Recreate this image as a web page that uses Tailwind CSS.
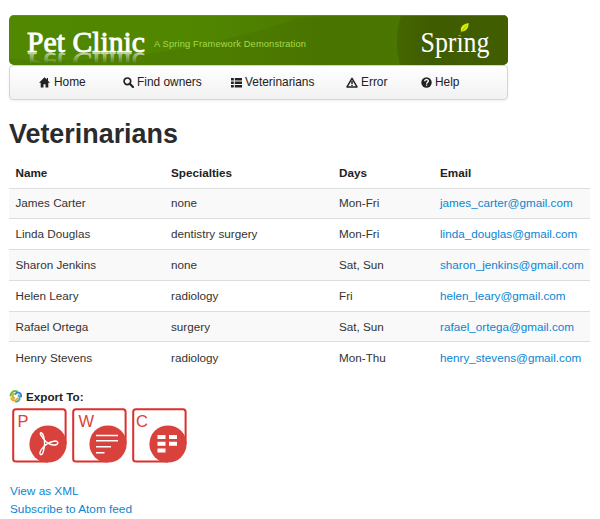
<!DOCTYPE html>
<html lang="en">
<head>
<meta charset="utf-8">
<title>Pet Clinic</title>
<script src="https://cdn.jsdelivr.net/npm/@tailwindcss/browser@4"></script>
</head>
<body class="bg-white">
<div class="h-[519px] w-[600px] overflow-hidden bg-white pl-[9px] pt-[15px] font-['Liberation_Sans',Arial,sans-serif] text-[11.700px] leading-[17px] text-[#333]">
  <header class="w-[499px]">
    <svg class="block h-[50px] w-[499px]" viewBox="0 0 499 50">
      <defs>
        <linearGradient id="bg" x1="0" x2="1" y1="0" y2="0"><stop offset="0" stop-color="#518800"/><stop offset=".4" stop-color="#508500"/><stop offset=".62" stop-color="#4d7900"/><stop offset="1" stop-color="#4f7d02"/></linearGradient>
        <linearGradient id="dark" x1="0" x2="1" y1="0" y2="0"><stop offset="0" stop-color="#446700"/><stop offset=".3" stop-color="#3f5c00"/><stop offset="1" stop-color="#405d00"/></linearGradient>
        <linearGradient id="shine" x1="0" x2="0" y1="36" y2="26" gradientUnits="userSpaceOnUse"><stop offset="0" stop-color="#fff" stop-opacity=".5"/><stop offset="1" stop-color="#fff" stop-opacity="0"/></linearGradient>
        <clipPath id="c"><rect width="499" height="50" rx="5"/></clipPath>
      </defs>
      <g clip-path="url(#c)">
        <rect width="499" height="50" fill="url(#bg)"/>
        <path d="M0 44Q70 49 145 38T290 3L330 0H400V50H0Z" fill="#446800" fill-opacity=".25"/>
        <path d="M392 0Q384 25 391 50H499V0Z" fill="url(#dark)"/>
        <path d="M0 .5H499" stroke="#6f963a" stroke-opacity=".6"/>
      </g>
      <g font-family="'Liberation Serif', serif">
        <text x="18" y="36.500" font-size="30" fill="#fff" stroke="#fff" stroke-width=".9" textLength="118" lengthAdjust="spacingAndGlyphs">Pet Clinic</text>
        <text aria-hidden="true" transform="matrix(1 0 0 -1 0 74.500)" x="18" y="36.500" font-size="30" fill="url(#shine)" stroke="url(#shine)" stroke-width=".7" textLength="118" lengthAdjust="spacingAndGlyphs">Pet Clinic</text>
        <text x="411.500" y="37" font-size="29.500" fill="#fff" textLength="69" lengthAdjust="spacingAndGlyphs">Spring</text>
      </g>
      <circle cx="451.500" cy="18" r="2.800" fill="#405d00"/>
      <path d="M452 16.800C450.800 11 454.800 9 459.600 8C459.800 13 457 16.600 452 16.800Z" fill="#d9f000"/>
      <path d="M451.300 18.300L457.500 10.500" stroke="#759500" stroke-width=".6"/>
      <text x="145" y="31.500" font-family="'Liberation Sans', sans-serif" font-size="9.300" fill="#a5db4c" textLength="152">A Spring Framework Demonstration</text>
    </svg>
    <nav class="flex h-[35px] items-center rounded-[4px] border border-[#d4d4d4] bg-linear-to-b from-white to-[#f2f2f2] text-[11.900px] text-[#222] shadow-[0_1px_3px_rgba(0,0,0,0.06)]">
      <a class="flex w-[83px] items-center gap-[4px] pl-[29px]"><svg class="h-[11px] w-[11px] shrink-0" viewBox="0 0 11 11"><path d="M5.500 .3L0 5.800H1.700V10.500H4.500V7.200H6.500V10.500H9.300V5.800H11L9 3.800V1H7.700V2.500Z" fill="#222"/></svg>Home</a>
      <a class="ml-[30px] flex w-[108px] items-center gap-[3px]"><svg class="h-[11px] w-[11px] shrink-0" viewBox="0 0 11 11"><circle cx="4.400" cy="4.300" r="3.300" fill="none" stroke="#222" stroke-width="1.700"/><path d="M6.800 6.800L10 10" stroke="#222" stroke-width="2.200" stroke-linecap="round"/></svg>Find owners</a>
      <a class="flex w-[115px] items-center gap-[3px]"><svg class="h-[11px] w-[11px] shrink-0" viewBox="0 0 11 11"><path d="M0 1H2.800V3.400H0ZM3.800 1H11V3.400H3.800ZM0 4.500H2.800V6.900H0ZM3.800 4.500H11V6.900H3.800ZM0 8H2.800V10.400H0ZM3.800 8H11V10.400H3.800Z" fill="#222"/></svg>Veterinarians</a>
      <a class="flex w-[75px] items-center gap-[3px]"><svg class="h-[11px] w-[12px] shrink-0" viewBox="0 0 12 11"><path d="M6 1.300L11 9.900H1Z" fill="none" stroke="#222" stroke-width="1.500" stroke-linejoin="round"/><path d="M6 4V7M6 7.800V9" stroke="#222" stroke-width="1.500"/></svg>Error</a>
      <a class="flex items-center gap-[3px]"><svg class="h-[11px] w-[11px] shrink-0" viewBox="0 0 11 11"><circle cx="5.500" cy="5.500" r="5.200" fill="#222"/><path d="M3.700 4.200C3.700 1.900 7.400 2 7.400 4.100C7.400 5.400 5.600 5.300 5.600 6.700M5.600 7.500V8.800" fill="none" stroke="#fff" stroke-width="1.300"/></svg>Help</a>
    </nav>
  </header>

  <h2 class="mt-[17px] h-[33px] text-[26.900px] font-bold leading-[34px] text-[#2b2b2b]">Veterinarians</h2>

  <table class="mt-[8px] w-[581px] table-fixed border-collapse text-left [&_td]:h-[30.800px] [&_td]:border-t [&_td]:border-[#ddd] [&_td]:p-0 [&_td]:pb-px [&_td]:pl-[7px] [&_td:first-child]:pl-[6.500px] [&_th:first-child]:pl-[6.500px] [&_th]:h-[30px] [&_th]:p-0 [&_th]:pl-[7px] [&_th]:text-[#222]">
    <colgroup><col class="w-[155px]"><col class="w-[168px]"><col class="w-[101px]"><col></colgroup>
    <thead><tr><th>Name</th><th>Specialties</th><th>Days</th><th>Email</th></tr></thead>
    <tbody class="[&>tr:nth-child(odd)]:bg-[#f9f9f9] [&_a]:text-[#0a85d1]">
      <tr><td>James Carter</td><td>none</td><td>Mon-Fri</td><td><a>james_carter@gmail.com</a></td></tr>
      <tr><td>Linda Douglas</td><td>dentistry surgery</td><td>Mon-Fri</td><td><a>linda_douglas@gmail.com</a></td></tr>
      <tr><td>Sharon Jenkins</td><td>none</td><td>Sat, Sun</td><td><a>sharon_jenkins@gmail.com</a></td></tr>
      <tr><td>Helen Leary</td><td>radiology</td><td>Fri</td><td><a>helen_leary@gmail.com</a></td></tr>
      <tr><td>Rafael Ortega</td><td>surgery</td><td>Sat, Sun</td><td><a>rafael_ortega@gmail.com</a></td></tr>
      <tr><td>Henry Stevens</td><td>radiology</td><td>Mon-Thu</td><td><a>henry_stevens@gmail.com</a></td></tr>
    </tbody>
  </table>

  <div class="mt-[15px] flex h-[17px] items-center gap-[3px] font-bold text-[#222]">
    <svg class="h-[14px] w-[14px]" viewBox="0 0 14 14" fill="none" stroke-width="2" stroke-linecap="round">
      <path d="M1.500 6.500C2 3 5 1 8 2.500" stroke="#72b944"/><path d="M6.500 5C8.500 2 12.500 4 12 7.500" stroke="#3789bf"/><path d="M9.500 6.500C12 9 10.500 12.500 7 12.700" stroke="#4baac8"/><path d="M8.500 9.500C6.500 12.500 3.500 12 2.200 9.300" stroke="#e9ac25"/><path d="M5 9C3 8 3 5.500 4.800 4.800" stroke="#c6ad35"/>
    </svg>Export To:
  </div>
  <div class="mt-[3px] flex gap-[5px] pl-[2.500px]">
    <svg class="h-[55px] w-[55px]" viewBox="0 0 55 55"><path d="M36 53.600H4Q1.200 53.600 1.200 51V4Q1.200 1.200 4 1.200H51Q53.600 1.200 53.600 4V36" fill="#fff" stroke="#db302d" stroke-width="2"/><circle cx="36" cy="36" r="18.600" fill="#d9423c"/><text x="5.500" y="18.500" font-family="'Liberation Sans', sans-serif" font-size="16.500" fill="#d9423c">P</text><path d="M29.500 28C31.500 32 36 36.500 41 37C46.500 37.500 47.500 33 43 33C37 33.500 31.500 38 29 42C26.500 46.500 29.500 48.500 31 44.500C33 39 33 33 31.500 28C30 23.500 26.500 24 29.500 28Z" fill="none" stroke="#fff" stroke-width="1.400"/></svg>
    <svg class="h-[55px] w-[55px]" viewBox="0 0 55 55"><path d="M36 53.600H4Q1.200 53.600 1.200 51V4Q1.200 1.200 4 1.200H51Q53.600 1.200 53.600 4V36" fill="#fff" stroke="#db302d" stroke-width="2"/><circle cx="36" cy="36" r="18.600" fill="#d9423c"/><text x="6.500" y="18.500" font-family="'Liberation Sans', sans-serif" font-size="16.500" fill="#d9423c">W</text><path d="M24 27.500H46M24 32.700H46M24 38.700H39M24 44.700H32.500" stroke="#fff" stroke-width="1.500"/></svg>
    <svg class="h-[55px] w-[55px]" viewBox="0 0 55 55"><path d="M36 53.600H4Q1.200 53.600 1.200 51V4Q1.200 1.200 4 1.200H51Q53.600 1.200 53.600 4V36" fill="#fff" stroke="#db302d" stroke-width="2"/><circle cx="36" cy="36" r="18.600" fill="#d9423c"/><text x="4" y="18.500" font-family="'Liberation Sans', sans-serif" font-size="16.500" fill="#d9423c">C</text><path d="M25.500 27H33.500V31H25.500ZM37 27H45V31H37ZM25.500 33.800H33.500V37.800H25.500ZM37 33.800H45V37.800H37ZM25.500 40.600H33.500V44.600H25.500Z" fill="#fff"/></svg>
  </div>
  <div class="mt-[20px] flex flex-col gap-px pl-px text-[11.800px] text-[#0a85d1]"><a>View as XML</a><a>Subscribe to Atom feed</a></div>
</div>
</body>
</html>
